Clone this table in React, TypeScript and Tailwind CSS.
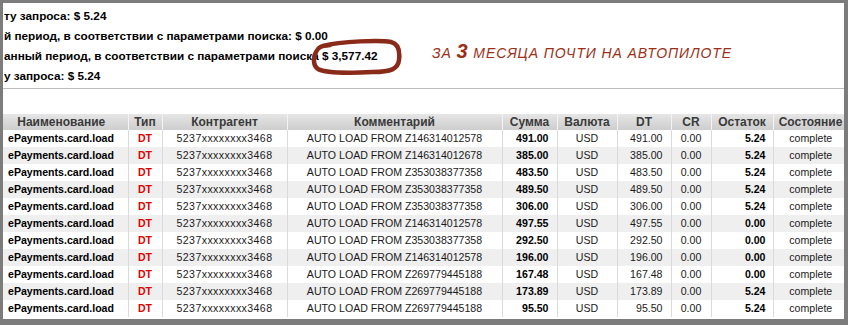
import React from 'react';

const rows = [
  { z: 'Z146314012578', sum: '491.00', rest: '5.24' },
  { z: 'Z146314012678', sum: '385.00', rest: '5.24' },
  { z: 'Z353038377358', sum: '483.50', rest: '5.24' },
  { z: 'Z353038377358', sum: '489.50', rest: '5.24' },
  { z: 'Z353038377358', sum: '306.00', rest: '5.24' },
  { z: 'Z146314012578', sum: '497.55', rest: '0.00' },
  { z: 'Z353038377358', sum: '292.50', rest: '0.00' },
  { z: 'Z146314012578', sum: '196.00', rest: '0.00' },
  { z: 'Z269779445188', sum: '167.48', rest: '0.00' },
  { z: 'Z269779445188', sum: '173.89', rest: '5.24' },
  { z: 'Z269779445188', sum: '95.50', rest: '5.24' },
];

const headers = ['Наименование', 'Тип', 'Контрагент', 'Комментарий', 'Сумма', 'Валюта', 'DT', 'CR', 'Остаток', 'Состояние'];
const widths = ['w-[125px]', 'w-[34px]', 'w-[125px]', 'w-[215px]', 'w-[55px]', 'w-[60px]', 'w-[54px]', 'w-[40px]', 'w-[62px]', 'w-[75px]'];

export default function App() {
  return (
    <div className="w-[848px] h-[325px] bg-[#7c7c7c] pt-[3px] pl-[3px] pr-[4px] pb-[6px]" style={{ fontFamily: '"Liberation Sans", Arial, sans-serif' }}>
      <div className="w-full h-full bg-white overflow-hidden">
        {/* Summary */}
        <div className="flex pt-[3px] h-[85px]">
          <div className="w-[429px] shrink-0 pl-[1px] text-[11.75px] font-bold leading-[20px] text-black whitespace-nowrap">
            <div>ту запроса: $ 5.24</div>
            <div>й период, в соответствии с параметрами поиска: $ 0.00</div>
            <div>
              анный период, в соответствии с параметрами поиска{' '}
              <span className="relative inline-block leading-[20px]">
                $ 3,577.42
                <svg className="absolute left-[-11px] top-[-8px]" width="92" height="38" viewBox="0 0 92 38" fill="none">
                  <path
                    d="M12 8 C 30 3, 70 2, 80 4 C 88 6, 89 14, 88 22 C 87 31, 80 34, 62 34 C 42 35, 16 36, 7 31 C 2 28, 2 19, 5 14 C 7 9, 10 8, 19 7"
                    stroke="#8a2b1a"
                    strokeWidth="4.5"
                    strokeLinecap="round"
                    strokeLinejoin="round"
                  />
                </svg>
              </span>
            </div>
            <div>у запроса: $ 5.24</div>
          </div>
          <div className="pt-[35px] text-[14px] italic uppercase text-[#9c2f16] tracking-[0.9px] whitespace-nowrap leading-[20px]">
            за <span className="text-[20px] font-bold">3</span> месяца почти на автопилоте
          </div>
        </div>
        <div className="h-px bg-[#bdbdbd] w-full" />

        {/* Table */}
        <div className="mt-[25px]">
          <table className="table-fixed border-collapse w-[845px] text-[10.6px]">
            <colgroup>
              {widths.map((w, i) => (
                <col key={i} className={w} />
              ))}
            </colgroup>
            <thead>
              <tr className="h-[16px] bg-linear-to-b from-[#e6e6e6] to-[#cdcdcd]">
                {headers.map((h, i) => (
                  <th
                    key={h}
                    className={`p-0 text-[12px] font-bold text-[#3a3a3a] leading-[16px] whitespace-nowrap border-r border-r-[#f3f3f3] ${i === 0 ? 'pr-[8px]' : ''}`}
                  >
                    {h}
                  </th>
                ))}
              </tr>
            </thead>
            <tbody>
              {rows.map((r, i) => (
                <tr key={i} className={`h-[17px] leading-[17px] ${i % 2 === 1 ? 'bg-[#efefef]' : 'bg-white'}`}>
                  <td className="p-0 pl-[5px] font-bold text-black border-r border-r-[#dadada]">ePayments.card.load</td>
                  <td className="p-0 text-center font-bold text-[#e00000] border-r border-r-[#dadada]">DT</td>
                  <td className="p-0 text-center text-[#1a1a1a] tracking-[0.4px] border-r border-r-[#dadada]">5237xxxxxxxx3468</td>
                  <td className="p-0 text-center text-[#1a1a1a] border-r border-r-[#dadada]">AUTO LOAD FROM {r.z}</td>
                  <td className="p-0 pr-[8px] text-right font-bold text-black border-r border-r-[#dadada]">{r.sum}</td>
                  <td className="p-0 text-center text-[#1a1a1a] border-r border-r-[#dadada]">USD</td>
                  <td className="p-0 pr-[8px] text-right text-[#1a1a1a] border-r border-r-[#dadada]">{r.sum}</td>
                  <td className="p-0 text-center text-[#1a1a1a] border-r border-r-[#dadada]">0.00</td>
                  <td className="p-0 pr-[7px] text-right font-bold text-black border-r border-r-[#dadada]">{r.rest}</td>
                  <td className="p-0 text-center text-[#1a1a1a]">complete</td>
                </tr>
              ))}
            </tbody>
          </table>
        </div>
      </div>
    </div>
  );
}
